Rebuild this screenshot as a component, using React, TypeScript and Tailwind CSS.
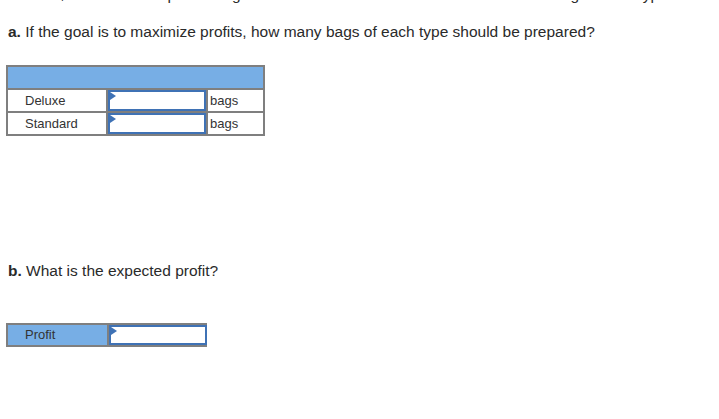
const font = "font-['Liberation_Sans',Arial,sans-serif]";

function AnswerBox() {
    return (
        <div className="relative h-full w-full border-2 border-[#3f72b5] bg-white">
            {/* little flag in the corner */}
            <span className="absolute left-0 top-0 h-0 w-0 border-y-[4px] border-l-[6px] border-y-transparent border-l-[#3f72b5]" />
        </div>
    );
}

const rows = [
    { label: "Deluxe", unit: "bags" },
    { label: "Standard", unit: "bags" },
];

export default function App() {
    return (
        <div className={`${font} h-[419px] w-[719px] overflow-hidden bg-white px-[6px] text-[#333]`}>
            {/* tail of previous paragraph, cut by the scroll */}
            <p className="-mt-[15px] whitespace-nowrap pl-[2px] text-[15.5px] leading-[20px] text-[#2a2a2a]">
                sell for $3.75 for a one-pound bag. The owner estimates that no more than 200 bags of one type can be
            </p>

            <p className="mt-[17px] pl-[2px] text-[15.5px] leading-[20px] text-[#2a2a2a]">
                <span className="font-bold">a.</span> If the goal is to maximize profits, how many bags of each type should be prepared?
            </p>

            {/* Table a */}
            <div className="mt-[23px] grid w-[259px] grid-cols-[98px_100px_57px] border-2 border-[#7f7f7f] text-[13px]">
                <div className="col-span-3 h-[21px] bg-[#77aee5]" />
                {rows.map((row) => (
                    <div key={row.label} className="contents">
                        <div className="flex h-[23px] items-center border-t-2 border-[#7f7f7f] pl-[17px]">{row.label}</div>
                        <div className="h-[23px] border-l-2 border-t-2 border-[#7f7f7f]">
                            <AnswerBox />
                        </div>
                        <div className="flex h-[23px] items-center border-l-2 border-t-2 border-[#7f7f7f] pl-[2px]">{row.unit}</div>
                    </div>
                ))}
            </div>

            <p className="mt-[125px] pl-[2px] text-[15.5px] leading-[20px] text-[#2a2a2a]">
                <span className="font-bold">b.</span> What is the expected profit?
            </p>

            {/* Table b */}
            <div className="mt-[42px] grid w-[201px] grid-cols-[99px_100px] border-2 border-[#7f7f7f] text-[13px]">
                <div className="flex h-[20px] items-center bg-[#77aee5] pl-[17px]">Profit</div>
                <div className="h-[20px] border-l-2 border-[#7f7f7f]">
                    <AnswerBox />
                </div>
            </div>
        </div>
    );
}
